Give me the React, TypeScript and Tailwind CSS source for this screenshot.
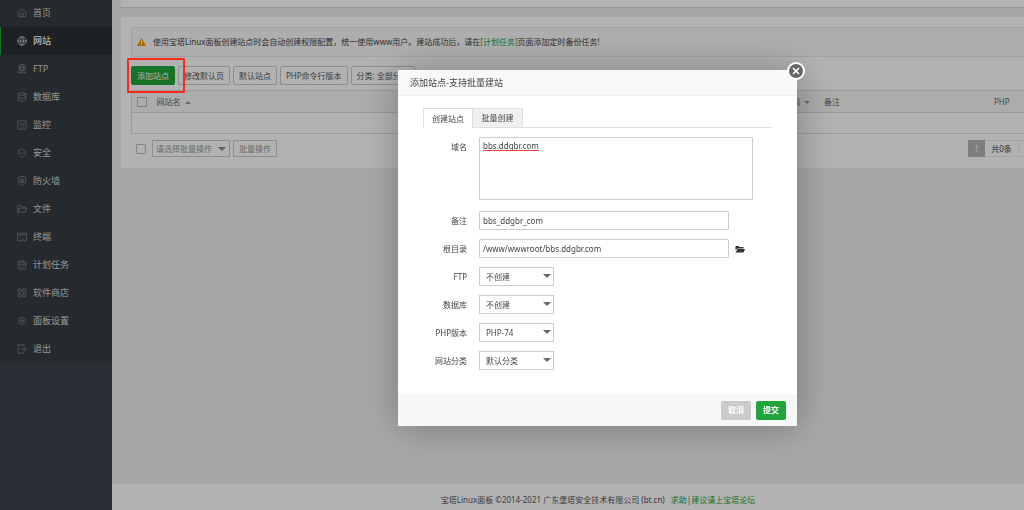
import React from 'react';
import {
  House,
  Globe,
  Database,
  ShieldCheck,
  CalendarDays,
  LayoutGrid,
  Settings,
} from 'lucide-react';

const iconProps = {
  viewBox: '0 0 24 24',
  fill: 'none',
  stroke: 'currentColor',
  strokeWidth: 1.8,
  className: 'size-[10px] shrink-0',
};

const FtpIcon = () => (
  <svg {...iconProps}>
    <circle cx="12" cy="9" r="8" />
    <path d="M4 9h16M12 1c-5 5-5 11 0 16M12 1c5 5 5 11 0 16M1 21h22M4 16v5M20 16v5" />
  </svg>
);

const MonitorIcon = () => (
  <svg {...iconProps}>
    <path d="M2 2h20v20H2z" />
    <path d="M6 11l4-4 3 6 5-7M6 17h3M12 17h6" />
  </svg>
);

const FirewallIcon = () => (
  <svg {...iconProps}>
    <path d="M12 1l9 3v8c0 5-4 9-9 11-5-2-9-6-9-11V4z" />
    <path d="M7 8h10M7 12h10M12 8v4M9 12v4h6v-4" />
  </svg>
);

const FolderIcon = () => (
  <svg {...iconProps}>
    <path d="M2 20V4h7l2 3h9v3M2 20L6 10h17l-3 10z" />
  </svg>
);

const TerminalIcon = () => (
  <svg {...iconProps}>
    <path d="M1 3h22v18H1zM1 7h22M6 11l3 2.500-3 2.500M12 17h5" />
  </svg>
);

const ExitIcon = () => (
  <svg {...iconProps}>
    <path d="M17 7V2H3v20h14v-5M9 12h13M18 8l4 4-4 4" />
  </svg>
);

const lucide = 'size-[10px] shrink-0';

const menu = [
  { name: '首页', icon: <House className={lucide} strokeWidth={1.8} /> },
  { name: '网站', icon: <Globe className={lucide} strokeWidth={2} />, active: true },
  { name: 'FTP', icon: <FtpIcon /> },
  { name: '数据库', icon: <Database className={lucide} strokeWidth={1.8} /> },
  { name: '监控', icon: <MonitorIcon /> },
  { name: '安全', icon: <ShieldCheck className={lucide} strokeWidth={1.8} /> },
  { name: '防火墙', icon: <FirewallIcon /> },
  { name: '文件', icon: <FolderIcon /> },
  { name: '终端', icon: <TerminalIcon /> },
  { name: '计划任务', icon: <CalendarDays className={lucide} strokeWidth={1.8} /> },
  { name: '软件商店', icon: <LayoutGrid className={lucide} strokeWidth={1.8} /> },
  { name: '面板设置', icon: <Settings className={lucide} strokeWidth={1.8} /> },
  { name: '退出', icon: <ExitIcon /> },
];

const Sidebar: React.FC = () => (
  <aside className="w-28 shrink-0 overflow-hidden bg-[#3c444d]">
    <nav className="-mt-px bg-[#353d44]">
      {menu.map((item) => (
        <a
          key={item.name}
          href="#"
          className={
            item.active
              ? 'flex h-7 items-center gap-[6px] border-l border-[#20a53a] bg-[#2a2e34] pl-4 text-[9px] font-medium text-white'
              : 'flex h-7 items-center gap-[6px] border-l border-transparent pl-4 text-[9px] text-[#d8d8d8]'
          }
        >
          <span className={item.active ? 'text-[#cccccc]' : 'text-[#85898d]'}>{item.icon}</span>
          {item.name}
        </a>
      ))}
    </nav>
  </aside>
);

const Caret: React.FC<{ up?: boolean; className?: string }> = ({ up, className }) => (
  <svg viewBox="0 0 8 4" className={className ?? 'ml-1 inline h-[3px] w-[6px] text-[#999999]'}>
    <path d={up ? 'M0 4L4 0L8 4z' : 'M0 0h8L4 4z'} fill="currentColor" />
  </svg>
);

const toolButton =
  'h-[19px] rounded-[2px] border border-[#cccccc] bg-white px-[5px] whitespace-nowrap text-[#555555]';

const checkbox = 'block size-[10px] appearance-none rounded-[1px] border border-[#bbbbbb]';

const Content: React.FC = () => (
  <main className="flex min-w-0 grow flex-col bg-[#f0f0f0]">
    <div className="ml-[9px] h-2 border-b border-[#d8d8d8] bg-white" />
    <section className="mt-[9px] ml-[9px] bg-white pt-[10px] pb-[11px] pl-[10px]">
      <div className="flex h-[30px] items-center border border-r-0 border-[#e8e8e8] bg-[#f9f9f9] pl-[5px]">
        <svg viewBox="0 0 18 16" className="h-2 w-[9px]">
          <path d="M9 0L18 16H0z" fill="#f39800" />
          <path d="M8 5h2v6H8zM8 12h2v2H8z" fill="#fff" />
        </svg>
        <p className="pl-[7px] whitespace-nowrap">
          使用宝塔Linux面板创建站点时会自动创建权限配置，统一使用www用户。建站成功后，请在
          <a href="#" className="text-[#20a53a]">[计划任务]</a>
          页面添加定时备份任务!
        </p>
      </div>

      <div className="mt-[9px] flex gap-[3px]">
        <div className="relative">
          <button className="h-[19px] rounded-[2px] border border-[#20a53a] bg-[#20a53a] px-[5px] whitespace-nowrap text-white">
            添加站点
          </button>
          <div className="pointer-events-none absolute -top-2 -left-1 z-50 h-[35px] w-[58px] rounded-[1px] border-2 border-[#fb2a1d]" />
        </div>
        <button className={toolButton}>修改默认页</button>
        <button className={toolButton}>默认站点</button>
        <button className={toolButton}>PHP命令行版本</button>
        <button className={toolButton}>分类: 全部分类</button>
      </div>

      <table className="mt-[5px] w-full table-fixed border-collapse border border-r-0 border-[#dddddd] text-left text-[#666666]">
        <colgroup>
          <col className="w-5" />
          <col />
          <col className="w-14" />
          <col className="w-[170px]" />
          <col className="w-[35px]" />
        </colgroup>
        <thead>
          <tr className="h-[22px] border-b border-[#dddddd] bg-[#f6f6f6]">
            <th className="pl-[5px]">
              <input type="checkbox" aria-label="全选" className={checkbox} />
            </th>
            <th className="pl-[5px] font-normal">
              网站名<Caret up />
            </th>
            <th className="pl-[5px] font-normal whitespace-nowrap">
              到期时间<Caret />
            </th>
            <th className="pl-[5px] font-normal">备注</th>
            <th className="pl-[5px] font-normal">PHP</th>
          </tr>
        </thead>
        <tbody>
          <tr className="h-[21px]">
            <td colSpan={5} />
          </tr>
        </tbody>
      </table>

      <div className="mt-[6px] flex h-[17px] items-center text-[#999999]">
        <input type="checkbox" aria-label="选择" className={checkbox + ' ml-[5px]'} />
        <div className="relative ml-[6px]">
          <select
            aria-label="批量操作"
            className="block h-[17px] w-[78px] appearance-none border border-[#cccccc] bg-white pl-[3px]"
          >
            <option>请选择批量操作</option>
          </select>
          <Caret className="pointer-events-none absolute top-[7px] right-1 h-1 w-2 text-[#888888]" />
        </div>
        <button className="ml-[3px] h-[17px] w-11 border border-[#cccccc] bg-white">批量操作</button>
        <div className="ml-auto flex text-[#444444]">
          <span className="flex h-[17px] w-[17px] items-center justify-center bg-[#b5b5b5] text-white">1</span>
          <span className="flex h-[17px] w-[34px] items-center justify-center border border-l-0 border-[#ececec]">
            共0条
          </span>
          <span className="w-[5px] border-y border-[#ececec]" />
        </div>
      </div>
    </section>

    <footer className="mt-auto h-[26px] bg-white pt-[10px] pl-[60px] text-center leading-3 whitespace-nowrap text-[#555555]">
      宝塔Linux面板 ©2014-2021 广东堡塔安全技术有限公司 (bt.cn)
      <a href="#" className="ml-[6px] text-[#20a53a]">求助|建议请上宝塔论坛</a>
    </footer>
  </main>
);

const Field: React.FC<{ id: string; label: string; children: React.ReactNode }> = ({ id, label, children }) => (
  <div className="flex items-start gap-3">
    <label htmlFor={id} className="w-11 shrink-0 text-right leading-[19px] whitespace-nowrap">
      {label}
    </label>
    {children}
  </div>
);

const SelectField: React.FC<{ id: string; label: string; value: string }> = ({ id, label, value }) => (
  <Field id={id} label={label}>
    <div className="relative">
      <select
        id={id}
        className="block h-[19px] w-[75px] appearance-none border border-[#cccccc] bg-white pl-[6px]"
      >
        <option>{value}</option>
      </select>
      <Caret className="pointer-events-none absolute top-[7px] right-[3px] h-1 w-2 text-[#666666]" />
    </div>
  </Field>
);

const textInput = 'h-[19px] w-[250px] rounded-[1px] border border-[#cccccc] px-[3px]';

const AddSiteDialog: React.FC = () => (
  <div className="fixed inset-0 z-40 flex items-start justify-center bg-black/30 pt-[70px] pl-[171px]">
    <div
      role="dialog"
      aria-labelledby="dialog-title"
      className="relative w-full max-w-[399px] bg-white text-[#444444] shadow-[1px_1px_36px_rgba(0,0,0,0.3)]"
    >
      <h2 id="dialog-title" className="h-[26px] border-b border-[#eeeeee] bg-[#f8f8f8] pl-3 text-[9px] leading-[26px]">
        添加站点-支持批量建站
      </h2>
      <button
        aria-label="关闭"
        className="absolute -top-2 -right-2 size-[18px] rounded-full border-2 border-white bg-[#666666] text-white"
      >
        <svg viewBox="0 0 14 14" className="size-[14px]" stroke="currentColor" strokeWidth="1.6">
          <path d="M4 4l6 6M10 4l-6 6" />
        </svg>
      </button>

      <form className="px-[25px] pt-3 pb-6">
        <div className="mb-[9px] flex h-5 border-b border-[#dcdfe6]">
          <button type="button" className="h-5 w-[50px] border border-b-0 border-[#dcdfe6] bg-white">
            创建站点
          </button>
          <button type="button" className="h-5 w-[50px] border border-l-0 border-[#dcdfe6] bg-[#f0f0f1]">
            批量创建
          </button>
        </div>

        <div className="flex flex-col gap-[9px]">
          <Field id="domain" label="域名">
            <div className="relative mb-[2px]">
              <textarea
                id="domain"
                spellCheck={false}
                defaultValue="bbs.ddgbr.com"
                className="block h-[63px] w-[274px] resize-none rounded-[1px] border border-[#cccccc] px-[3px] pt-[2px] leading-3"
              />
              <span className="pointer-events-none absolute top-[13px] left-1 h-px w-14 bg-[#f04040]" />
            </div>
          </Field>
          <Field id="remark" label="备注">
            <input id="remark" defaultValue="bbs_ddgbr_com" className={textInput} />
          </Field>
          <Field id="path" label="根目录">
            <div className="flex items-center gap-[6px]">
              <input id="path" defaultValue="/www/wwwroot/bbs.ddgbr.com" className={textInput} />
              <button type="button" aria-label="选择目录">
                <svg viewBox="0 0 20 16" className="h-2 w-[10px]" fill="#333">
                  <path d="M1 10V2h6l2 2h8v3H5z" />
                  <path d="M5 8h15l-3 7H1z" />
                </svg>
              </button>
            </div>
          </Field>
          <SelectField id="ftp" label="FTP" value="不创建" />
          <SelectField id="database" label="数据库" value="不创建" />
          <SelectField id="php" label="PHP版本" value="PHP-74" />
          <SelectField id="category" label="网站分类" value="默认分类" />
        </div>
      </form>

      <div className="flex h-8 items-center justify-end gap-[5px] bg-[#f6f8f8] pr-[11px] font-bold text-white">
        <button className="h-[19px] w-[30px] rounded-[2px] bg-[#cbcbcb]">取消</button>
        <button className="h-[19px] w-[30px] rounded-[2px] bg-[#20a53a]">提交</button>
      </div>
    </div>
  </div>
);

const App: React.FC = () => {
  return (
    <div className="flex min-h-screen overflow-hidden font-['Noto_Sans','Noto_Sans_CJK_SC',sans-serif] text-[8px] leading-3 text-[#444444]">
      <Sidebar />
      <Content />
      <AddSiteDialog />
    </div>
  );
};

export default App;
